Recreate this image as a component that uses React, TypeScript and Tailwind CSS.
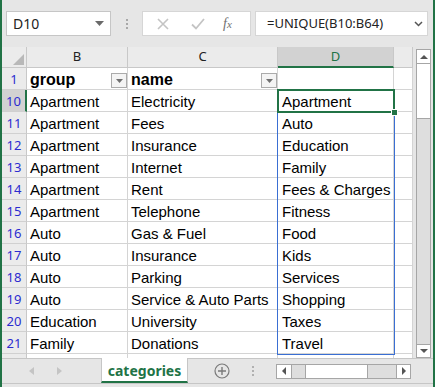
import React from "react";

const rows: { n: number; b: string; c: string; d: string }[] = [
  { n: 10, b: "Apartment", c: "Electricity", d: "Apartment" },
  { n: 11, b: "Apartment", c: "Fees", d: "Auto" },
  { n: 12, b: "Apartment", c: "Insurance", d: "Education" },
  { n: 13, b: "Apartment", c: "Internet", d: "Family" },
  { n: 14, b: "Apartment", c: "Rent", d: "Fees & Charges" },
  { n: 15, b: "Apartment", c: "Telephone", d: "Fitness" },
  { n: 16, b: "Auto", c: "Gas & Fuel", d: "Food" },
  { n: 17, b: "Auto", c: "Insurance", d: "Kids" },
  { n: 18, b: "Auto", c: "Parking", d: "Services" },
  { n: 19, b: "Auto", c: "Service & Auto Parts", d: "Shopping" },
  { n: 20, b: "Education", c: "University", d: "Taxes" },
  { n: 21, b: "Family", c: "Donations", d: "Travel" },
];

const cellFont = { fontFamily: '"Liberation Sans", Arial, sans-serif' };
const uiFont = { fontFamily: '"Noto Sans", "Open Sans", sans-serif' };

const FilterBtn = () => (
  <div className="self-end mb-[1px] w-[16px] h-[15px] border border-[#ababab] bg-[#f4f4f4] flex items-center justify-center">
    <svg width="7" height="4" viewBox="0 0 7 4">
      <path d="M0 0h7L3.5 4z" fill="#707070" />
    </svg>
  </div>
);

const Row = ({
  n,
  b,
  c,
  d,
  bold,
  active,
  filters,
}: {
  n: number | string;
  b: string;
  c: string;
  d: string;
  bold?: boolean;
  active?: boolean;
  filters?: boolean;
}) => (
  <div className="flex h-[22px] shrink-0 text-[15px] text-black" style={cellFont}>
    <div
      className={`w-[25px] shrink-0 flex items-center justify-center pt-[3px] text-[13px] text-[#2b2bd0] border-b border-[#d0d0d0] ${
        active ? "bg-[#d2d2d2] border-r-2 border-r-[#217346]" : "bg-[#ebebeb] border-r border-r-[#c8c8c8]"
      }`}
      style={uiFont}
    >
      {n}
    </div>
    <div className={`w-[101px] shrink-0 flex items-center justify-between pl-[3px] pt-[3px] bg-white border-r border-b border-[#d4d4d4] ${bold ? "font-bold text-[16px]" : ""}`}>
      <span>{b}</span>
      {filters && <FilterBtn />}
    </div>
    <div className={`w-[150px] shrink-0 flex items-center justify-between pl-[3px] pt-[3px] bg-white border-r border-b border-[#d4d4d4] ${bold ? "font-bold text-[16px]" : ""}`}>
      <span>{c}</span>
      {filters && <FilterBtn />}
    </div>
    <div className="w-[116px] shrink-0 flex items-center pl-[4px] pt-[3px] bg-white border-r border-b border-[#d4d4d4]">{d}</div>
    <div className="w-[19px] shrink-0 bg-white border-r border-b border-[#d4d4d4]" />
  </div>
);

export default function App() {
  return (
    <div className="w-[435px] h-[387px] flex flex-col bg-[#e6e6e6] border-x-2 border-[#217346] overflow-hidden select-none">
      {/* formula bar */}
      <div className="h-[47px] shrink-0 flex items-center pl-[4px]" style={uiFont}>
        <div className="w-[105px] h-[25px] bg-white border border-[#c6c6c6] flex items-center justify-between pl-[6px] pr-[6px] text-[14px] text-[#222]">
          <span>D10</span>
          <svg width="9" height="5" viewBox="0 0 9 5">
            <path d="M0 0h9L4.5 5z" fill="#6a6a6a" />
          </svg>
        </div>
        <div className="w-[31px] flex flex-col items-center gap-[2px]">
          <div className="w-[2px] h-[2px] bg-[#a8a8a8]" />
          <div className="w-[2px] h-[2px] bg-[#a8a8a8]" />
          <div className="w-[2px] h-[2px] bg-[#a8a8a8]" />
        </div>
        <div className="w-[109px] h-[25px] bg-white border border-[#d6d6d6] flex items-center">
          <svg className="ml-[14px]" width="12" height="12" viewBox="0 0 12 12">
            <path d="M1 1l10 10M11 1L1 11" stroke="#c4c4c4" strokeWidth="1.6" />
          </svg>
          <svg className="ml-[22px]" width="14" height="12" viewBox="0 0 14 12">
            <path d="M1 6.5l4 4L13 1" stroke="#c4c4c4" strokeWidth="1.8" fill="none" />
          </svg>
          <span
            className="ml-[18px] text-[14px] italic text-[#707070]"
            style={{ fontFamily: '"Liberation Serif", "Times New Roman", serif' }}
          >
            f<span className="text-[11px]">x</span>
          </span>
        </div>
        <div className="ml-[4px] w-[173px] h-[25px] bg-white border border-[#d6d6d6] flex items-center justify-between pl-[11px] pr-[4px] text-[13px] text-[#222]">
          <span>=UNIQUE(B10:B64)</span>
          <svg width="9" height="6" viewBox="0 0 9 6">
            <path d="M1 1l3.5 3.5L8 1" stroke="#555" strokeWidth="1.5" fill="none" />
          </svg>
        </div>
      </div>

      {/* sheet */}
      <div className="h-[311px] shrink-0 flex">
        <div className="relative w-[411px] shrink-0 flex flex-col overflow-hidden bg-white">
          {/* column headers */}
          <div className="flex h-[21px] shrink-0 text-[13px] text-[#222]" style={uiFont}>
            <div className="w-[25px] shrink-0 bg-[#ebebeb] border-r border-b border-[#c8c8c8] flex items-end justify-end p-[2px]">
              <svg width="11" height="11" viewBox="0 0 11 11">
                <path d="M11 0v11H0z" fill="#b8b8b8" />
              </svg>
            </div>
            <div className="w-[101px] shrink-0 bg-[#ebebeb] border-r border-b border-[#c8c8c8] flex items-center justify-center">B</div>
            <div className="w-[150px] shrink-0 bg-[#ebebeb] border-r border-b border-[#c8c8c8] flex items-center justify-center">C</div>
            <div className="w-[116px] shrink-0 bg-[#d2d2d2] border-r border-r-[#c8c8c8] border-b-2 border-b-[#217346] flex items-center justify-center text-[#217346]">D</div>
            <div className="w-[19px] shrink-0 bg-[#ebebeb] border-r border-b border-[#c8c8c8]" />
          </div>
          <Row n={1} b="group" c="name" d="" bold filters />
          {rows.map((r) => (
            <Row key={r.n} {...r} active={r.n === 10} />
          ))}
          <Row n="" b="" c="" d="" />

          {/* spill range border */}
          <div className="absolute left-[275px] top-[43px] w-[118px] h-[265px] border border-[#3a6fd3] pointer-events-none" />
          {/* active cell */}
          <div className="absolute left-[275px] top-[42px] w-[118px] h-[24px] border-2 border-[#217346] pointer-events-none">
            <div className="absolute -right-[5px] -bottom-[5px] w-[7px] h-[7px] bg-[#217346] border border-white" />
          </div>
        </div>
        <div className="w-[3px] shrink-0" />
        {/* vertical scrollbar */}
        <div className="w-[15px] shrink-0 mt-[2px] flex flex-col border border-[#a6a6a6] bg-[#dedede]">
          <div className="h-[14px] shrink-0 bg-white border-b border-[#a6a6a6] flex items-center justify-center">
            <svg width="8" height="4" viewBox="0 0 8 4">
              <path d="M0 4h8L4 0z" fill="#555" />
            </svg>
          </div>
          <div className="h-[55px] shrink-0 bg-white border-b border-[#a6a6a6]" />
          <div className="flex-1" />
          <div className="h-[13px] shrink-0 bg-white border-t border-[#a6a6a6] flex items-center justify-center">
            <svg width="8" height="4" viewBox="0 0 8 4">
              <path d="M0 0h8L4 4z" fill="#555" />
            </svg>
          </div>
        </div>
      </div>

      {/* sheet tabs */}
      <div className="h-[25px] shrink-0 flex items-stretch border-t border-[#c6c6c6]" style={uiFont}>
        <div className="w-[99px] shrink-0 flex items-center">
          <svg className="ml-[27px]" width="5" height="8" viewBox="0 0 5 8">
            <path d="M5 0v8L0 4z" fill="#c4c4c4" />
          </svg>
          <svg className="ml-[23px]" width="5" height="8" viewBox="0 0 5 8">
            <path d="M0 0v8l5-4z" fill="#c4c4c4" />
          </svg>
        </div>
        <div className="-mt-px w-[87px] shrink-0 bg-white border-x border-[#c6c6c6] border-b-2 border-b-[#217346] flex items-center justify-center pt-[2px] text-[14px] font-bold text-[#217346]">
          categories
        </div>
        <div className="w-[42px] shrink-0 flex items-center justify-end">
          <svg width="16" height="16" viewBox="0 0 16 16">
            <circle cx="8" cy="8" r="7" fill="none" stroke="#7a7a7a" strokeWidth="1.2" />
            <path d="M8 4v8M4 8h8" stroke="#7a7a7a" strokeWidth="1.4" />
          </svg>
        </div>
        <div className="w-[45px] shrink-0 flex flex-col items-center justify-center gap-[2px]">
          <div className="w-[2px] h-[2px] bg-[#b0b0b0]" />
          <div className="w-[2px] h-[2px] bg-[#b0b0b0]" />
          <div className="w-[2px] h-[2px] bg-[#b0b0b0]" />
        </div>
        {/* horizontal scrollbar */}
        <div className="ml-[1px] w-[135px] h-[15px] self-center flex bg-[#dedede] border border-[#a6a6a6]">
          <div className="w-[15px] shrink-0 bg-white border-r border-[#a6a6a6] flex items-center justify-center">
            <svg width="4" height="8" viewBox="0 0 4 8">
              <path d="M4 0v8L0 4z" fill="#555" />
            </svg>
          </div>
          <div className="ml-[13px] w-[63px] shrink-0 bg-white border-x border-[#a6a6a6]" />
          <div className="flex-1" />
          <div className="w-[14px] shrink-0 bg-white border-l border-[#a6a6a6] flex items-center justify-center">
            <svg width="4" height="8" viewBox="0 0 4 8">
              <path d="M0 0v8l4-4z" fill="#555" />
            </svg>
          </div>
        </div>
      </div>
      <div className="flex-1 border-t border-[#c6c6c6]" />
    </div>
  );
}
